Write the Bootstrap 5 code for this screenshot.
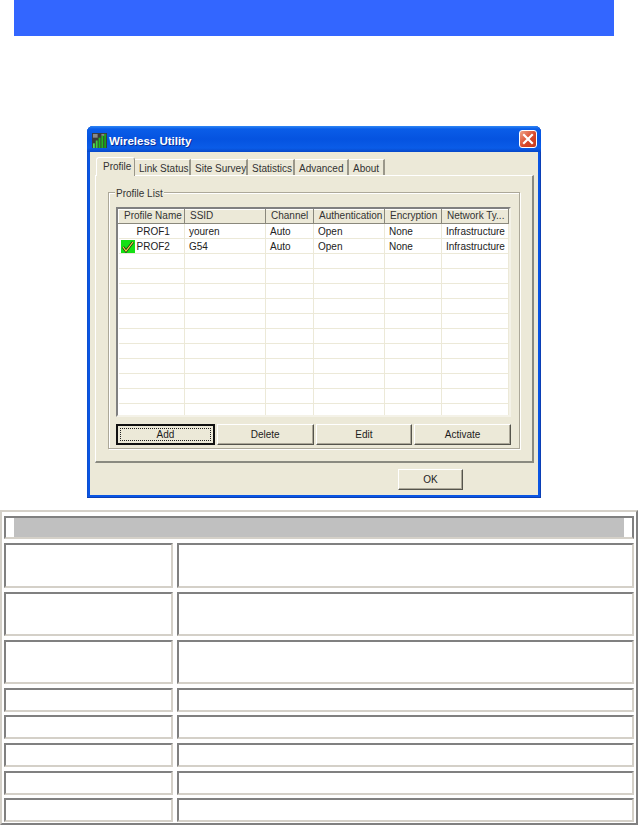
<!DOCTYPE html>
<html lang="en">
<head>
<meta charset="utf-8">
<title>Wireless Utility</title>
<link href="https://cdn.jsdelivr.net/npm/bootstrap@5.3.0/dist/css/bootstrap.min.css" rel="stylesheet">
<style>
html,body{height:825px;overflow:hidden;background:#fff}
body{font-family:"Liberation Sans",Arial,sans-serif;font-size:10px;color:#1c1c1c}
.topbar{height:36px;width:600px;margin-left:14px;background:#36f}
.xpwin{width:454px;height:372px;margin:90px 0 12px 87px;background:#0a55e3;border-radius:6px 6px 0 0;padding:0 3px 3px;box-shadow:inset 0 -1px 0 #0b3fb5,inset -1px 0 0 #0b3fb5,inset 1px 0 0 #0d4fd0}
.xptitle{height:26px;margin:0 -3px;padding:0 4px 0 5px;border-radius:6px 6px 0 0;background:linear-gradient(#2f86f5 0,#0a5de8 3px,#0553e0 50%,#0a5ce8 85%,#0647c8 100%)}
.xptitle-text{font-size:11.5px;font-weight:700;color:#fff;text-shadow:1px 1px 0 #0a2f9a;padding-top:5px}
.xptitle svg.xplogo{margin-top:2px;margin-right:2px}
.xpclose{width:18px;height:18px;background:linear-gradient(135deg,#f0a488,#d9482a 55%,#c43a1c);border:1px solid #fff;border-radius:3px}
.xpclient{height:343px;background-color:#ece9d8;background-image:radial-gradient(#e3e0ce .6px,transparent .7px);background-size:4px 4px;padding:5px 5px 0 5px}
.xptabs{height:18px;gap:0;border:0;padding-left:1px;align-items:flex-end}
.xptab{height:16px;padding:0 0 0 4px;border-right:2px solid #9a978a;border-top:1px solid #fff;line-height:17px;white-space:nowrap;color:#333}
.xptab.xpactive{height:19px;padding:0 0 0 6px;border-left:1px solid #fff;border-right:1px solid #9a978a;border-radius:3px 3px 0 0;line-height:17px;position:relative;margin-bottom:-1px;z-index:1;background:#ece9d8}
.xppage{width:439px;height:288px;padding:16px 12px 0 12px;border:1px solid #fff;border-right:2px solid #8a8a80;border-bottom:2px solid #8a8a80}
.xpgroup{position:relative;width:412px;height:257px;padding:14px 8px 0 7px;border:1px solid #aca899;box-shadow:inset 1px 1px 0 #fff,1px 1px 0 #fff}
.xplegend{position:absolute;left:6px;top:-5px;padding:0 1px;line-height:12px;background:#ece9d8;color:#333}
.xplist{width:395px;height:210px;overflow:hidden;background:#fff;border:2px solid;border-color:#808080 #f4f2e8 #f4f2e8 #808080}
.xplist table{table-layout:fixed;width:390px;border-collapse:collapse}
.xplist th{height:14px;padding:0 0 1px 5px;font-weight:400;background:#ece9d8;border:1px solid;border-color:#fff #8a887c #8a887c #fff;white-space:nowrap;line-height:12px;color:#333}
.xplist td{height:15px;padding:2px 0 0 4px;border-right:1px solid #ece9d8;border-bottom:1px solid #ece9d8;white-space:nowrap;line-height:12px;color:#222}
.xplist td.xpname{padding-left:18px}
.xplist td.xpon{position:relative}
.xpmark{position:absolute;left:2px;top:1px;width:14px;height:13px;background:#14e014}
.xpbtns{width:395px;margin-top:7px;gap:2px}
.xpbtn{flex:1 1 0;height:21px;padding:0;font-size:10px;line-height:18px;border-radius:0;color:#1c1c1c;background:#ece9d8;border:1px solid;border-color:#fff #55544c #55544c #fff;box-shadow:inset -1px -1px 0 #aca899}
.xpbtn.xpdefault{border:2px solid #111;outline:1px dotted #222;outline-offset:-5px;box-shadow:none}
.xpok{width:65px;flex:none}
.xpfoot{margin-top:6px;padding-right:70px}
.xpouter{height:315px;padding:4px 2px 0;border:2px solid;border-color:#d4d0c8 #808080 #808080 #d4d0c8}
.xpgrid{display:grid;grid-template-columns:169px 457px;column-gap:4px;row-gap:3.7px;grid-template-rows:23.3px 45px 44.3px 44.3px 24px 24px 24px 24px 24px}
.xpcell{border:2px solid;border-color:#808080 #d4d0c8 #d4d0c8 #808080;background:#fff}
.xphead{grid-column:1/3;border-right-color:#808080;padding:0 8px;display:flex}
.xphead>div{flex:1;background:silver}
</style>
</head>
<body>
<div class="topbar"></div>

<div class="xpwin">
  <div class="xptitle d-flex align-items-center">
    <svg width="15" height="15" viewBox="0 0 16 16" class="xplogo flex-shrink-0" aria-hidden="true">
      <rect width="16" height="16" fill="#3a3a3a"/>
      <path d="M1 1h5v4H1z" fill="#8a8a8a"/><path d="M10 1h5v2h-5z" fill="#8a8a8a"/>
      <path d="M1 11h2v5H1z" fill="#4fe04f"/><path d="M4 8h2v8H4z" fill="#3fd03f"/><path d="M7 5h2v11H7z" fill="#22b822"/><path d="M10 3h2v13h-2z" fill="#22b822"/><path d="M13 1h2v15h-2z" fill="#1aa01a"/>
    </svg>
    <span class="xptitle-text flex-grow-1">Wireless Utility</span>
    <span class="xpclose d-flex align-items-center justify-content-center">
      <svg width="12" height="12" viewBox="0 0 12 12" aria-hidden="true"><path d="M2 2l8 8M10 2l-8 8" stroke="#fff" stroke-width="2.2" stroke-linecap="square"/></svg>
    </span>
  </div>
  <div class="xpclient">
    <div class="nav xptabs">
      <div class="xptab xpactive" style="width:39px">Profile</div>
      <div class="xptab" style="width:56px">Link Status</div>
      <div class="xptab" style="width:57px">Site Survey</div>
      <div class="xptab" style="width:47px">Statistics</div>
      <div class="xptab" style="width:54px">Advanced</div>
      <div class="xptab" style="width:36px">About</div>
    </div>
    <div class="xppage">
      <div class="xpgroup">
        <div class="xplegend">Profile List</div>
        <div class="xplist">
          <table>
            <colgroup><col style="width:66px"><col style="width:81px"><col style="width:48px"><col style="width:71px"><col style="width:57px"><col style="width:67px"></colgroup>
            <thead><tr><th>Profile Name</th><th>SSID</th><th>Channel</th><th>Authentication</th><th>Encryption</th><th>Network Ty...</th></tr></thead>
            <tbody>
              <tr><td class="xpname">PROF1</td><td>youren</td><td>Auto</td><td>Open</td><td>None</td><td>Infrastructure</td></tr>
              <tr><td class="xpname xpon"><span class="xpmark"><svg width="14" height="13" viewBox="0 0 14 13" class="d-block" aria-hidden="true"><path d="M2 7l3 4 7-9" fill="none" stroke="#222" stroke-width="2.6"/><path d="M2 7l3 4 7-9" fill="none" stroke="#ffe93a" stroke-width="1.1"/></svg></span>PROF2</td><td>G54</td><td>Auto</td><td>Open</td><td>None</td><td>Infrastructure</td></tr>
              <tr><td></td><td></td><td></td><td></td><td></td><td></td></tr>
              <tr><td></td><td></td><td></td><td></td><td></td><td></td></tr>
              <tr><td></td><td></td><td></td><td></td><td></td><td></td></tr>
              <tr><td></td><td></td><td></td><td></td><td></td><td></td></tr>
              <tr><td></td><td></td><td></td><td></td><td></td><td></td></tr>
              <tr><td></td><td></td><td></td><td></td><td></td><td></td></tr>
              <tr><td></td><td></td><td></td><td></td><td></td><td></td></tr>
              <tr><td></td><td></td><td></td><td></td><td></td><td></td></tr>
              <tr><td></td><td></td><td></td><td></td><td></td><td></td></tr>
              <tr><td></td><td></td><td></td><td></td><td></td><td></td></tr>
              <tr><td></td><td></td><td></td><td></td><td></td><td></td></tr>
            </tbody>
          </table>
        </div>
        <div class="d-flex xpbtns">
          <button type="button" class="btn xpbtn xpdefault">Add</button>
          <button type="button" class="btn xpbtn">Delete</button>
          <button type="button" class="btn xpbtn">Edit</button>
          <button type="button" class="btn xpbtn">Activate</button>
        </div>
      </div>
    </div>
    <div class="d-flex justify-content-end xpfoot">
      <button type="button" class="btn xpbtn xpok">OK</button>
    </div>
  </div>
</div>

<div class="xpouter">
  <div class="xpgrid">
    <div class="xpcell xphead"><div></div></div>
    <div class="xpcell"></div><div class="xpcell"></div>
    <div class="xpcell"></div><div class="xpcell"></div>
    <div class="xpcell"></div><div class="xpcell"></div>
    <div class="xpcell"></div><div class="xpcell"></div>
    <div class="xpcell"></div><div class="xpcell"></div>
    <div class="xpcell"></div><div class="xpcell"></div>
    <div class="xpcell"></div><div class="xpcell"></div>
    <div class="xpcell"></div><div class="xpcell"></div>
  </div>
</div>
<script src="https://cdn.jsdelivr.net/npm/bootstrap@5.3.0/dist/js/bootstrap.bundle.min.js"></script>
</body>
</html>
